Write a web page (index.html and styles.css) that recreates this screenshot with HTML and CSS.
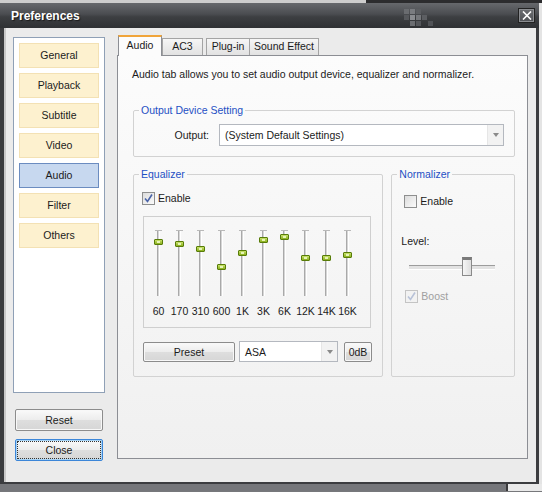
FILE: index.html
```html
<!DOCTYPE html>
<html lang="en">
<head>
  <meta charset="UTF-8">
  <meta name="viewport" content="width=device-width, initial-scale=1.0">
  <title>Preferences</title>
  <link rel="stylesheet" href="styles.css">
</head>
<body>
  <div class="desktop-top"></div>

  <div class="screen">
    <div class="window">
      <div class="titlebar">
        <span class="title">Preferences</span>
        <svg class="deco" width="30" height="18" viewBox="0 0 30 18">
          <rect x="0" y="0" width="5" height="5" fill="#6a6c70"/>
          <rect x="6" y="0" width="5" height="5" fill="#7a7c80"/>
          <rect x="12" y="0" width="5" height="5" fill="#5c5e62"/>
          <rect x="6" y="6" width="5" height="5" fill="#8a8c90"/>
          <rect x="12" y="6" width="5" height="5" fill="#75777b"/>
          <rect x="18" y="6" width="5" height="5" fill="#5c5e62"/>
          <rect x="0" y="6" width="5" height="5" fill="#56585c"/>
          <rect x="6" y="12" width="5" height="5" fill="#6c6e72"/>
          <rect x="12" y="12" width="5" height="5" fill="#55575b"/>
          <rect x="24" y="12" width="5" height="5" fill="#505256"/>
        </svg>
        <span class="close-x">
          <svg width="10" height="9" viewBox="0 0 10 9">
            <path d="M1 0.5 L9 8.5 M9 0.5 L1 8.5" stroke="#ffffff" stroke-width="1.6"/>
          </svg>
        </span>
      </div>

      <div class="client">
        <div class="sidebar">
          <div class="category-list">
            <div class="category">General</div>
            <div class="category">Playback</div>
            <div class="category">Subtitle</div>
            <div class="category">Video</div>
            <div class="category selected">Audio</div>
            <div class="category">Filter</div>
            <div class="category">Others</div>
          </div>
          <div class="push reset">Reset</div>
          <div class="push close">Close</div>
        </div>

        <div class="tabs">
          <div class="tab-strip">
            <div class="tab active">Audio</div>
            <div class="tab tab-ac3">AC3</div>
            <div class="tab tab-plugin">Plug-in</div>
            <div class="tab tab-effect">Sound Effect</div>
          </div>

          <div class="tab-page">
            <p class="desc">Audio tab allows you to set audio output device, equalizer and normalizer.</p>

            <fieldset class="group output-group">
              <legend>Output Device Setting</legend>
              <div class="output-row">
                <span class="output-label">Output:</span>
                <div class="combo output-combo">
                  <span class="combo-text">(System Default Settings)</span>
                  <span class="combo-arrow"></span>
                </div>
              </div>
            </fieldset>

            <div class="group-row">
              <fieldset class="group eq-group">
                <legend>Equalizer</legend>
                <div class="check-row eq-enable">
                  <span class="checkbox checked">
                    <svg width="11" height="11" viewBox="0 0 11 11"><path d="M2 5.5 L4.5 8.5 L9 1.5" fill="none" stroke="#4a64a8" stroke-width="1.6"/></svg>
                  </span>
                  <span>Enable</span>
                </div>

                <div class="eq-box">
                  <div class="band"><div class="track"><span class="thumb" style="top: 8px"></span></div><span class="band-label">60</span></div>
                  <div class="band"><div class="track"><span class="thumb" style="top: 10px"></span></div><span class="band-label">170</span></div>
                  <div class="band"><div class="track"><span class="thumb" style="top: 15px"></span></div><span class="band-label">310</span></div>
                  <div class="band"><div class="track"><span class="thumb" style="top: 33px"></span></div><span class="band-label">600</span></div>
                  <div class="band"><div class="track"><span class="thumb" style="top: 19px"></span></div><span class="band-label">1K</span></div>
                  <div class="band"><div class="track"><span class="thumb" style="top: 6px"></span></div><span class="band-label">3K</span></div>
                  <div class="band"><div class="track"><span class="thumb" style="top: 3px"></span></div><span class="band-label">6K</span></div>
                  <div class="band"><div class="track"><span class="thumb" style="top: 24px"></span></div><span class="band-label">12K</span></div>
                  <div class="band"><div class="track"><span class="thumb" style="top: 24px"></span></div><span class="band-label">14K</span></div>
                  <div class="band"><div class="track"><span class="thumb" style="top: 21px"></span></div><span class="band-label">16K</span></div>
                </div>

                <div class="eq-buttons">
                  <div class="push preset">Preset</div>
                  <div class="combo preset-combo">
                    <span class="combo-text">ASA</span>
                    <span class="combo-arrow"></span>
                  </div>
                  <div class="push zero-db">0dB</div>
                </div>
              </fieldset>

              <fieldset class="group norm-group">
                <legend>Normalizer</legend>
                <div class="check-row norm-enable">
                  <span class="checkbox"></span>
                  <span>Enable</span>
                </div>
                <div class="level-label">Level:</div>
                <div class="hslider">
                  <span class="hthumb"></span>
                </div>
                <div class="check-row boost disabled">
                  <span class="checkbox checked">
                    <svg width="11" height="11" viewBox="0 0 11 11"><path d="M2 5.5 L4.5 8.5 L9 1.5" fill="none" stroke="#b8c2d8" stroke-width="1.6"/></svg>
                  </span>
                  <span>Boost</span>
                </div>
              </fieldset>
            </div>
          </div>
        </div>
      </div>
    </div>
    <div class="edge"></div>
  </div>

  <div class="desktop-bottom"></div>
</body>
</html>
```

FILE: styles.css
```css
* {
  box-sizing: border-box;
}
body {
  margin: 0;
  width: 542px;
  height: 492px;
  overflow: hidden;
  background: #77787b;
  font-family: "Liberation Sans", Arial, sans-serif;
  font-size: 10.5px;
  color: #1b1b1b;
}
.desktop-top {
  height: 3px;
  background: linear-gradient(to right, #cdcdcd 0, #cdcdcd 366px, #2c2c2e 366px);
}
.screen {
  display: flex;
}
.window {
  width: 539px;
  background: #3b3c3f;
  padding-bottom: 2px;
}
.edge {
  width: 3px;
  background: #e4e4e4;
}
.desktop-bottom {
  height: 7px;
  background: linear-gradient(to right, #75767a 0, #75767a 506px, #3a3a3c 506px, #3a3a3c 508px, #e9e9e9 508px);
}

/* title bar */
.titlebar {
  height: 25px;
  display: flex;
  align-items: center;
  padding-left: 11px;
  background: linear-gradient(#66686c, #4a4c50 45%, #3d3f42 55%, #2f3134);
}
.title {
  color: #fff;
  font-weight: bold;
  font-size: 12px;
  text-shadow: 1px 1px 1px #1a1a1a;
}
.deco {
  margin-left: 324px;
  margin-top: 4px;
}
.close-x {
  margin-left: auto;
  margin-right: 4px;
  width: 17px;
  height: 15px;
  display: flex;
  align-items: center;
  justify-content: center;
  background: linear-gradient(#6c6e72, #4e5054);
  border: 1px solid #222;
  box-shadow: inset 0 0 0 1px #8a8c90;
}

/* client area */
.client {
  height: 454px;
  margin: 0 3px 0 4px;
  border-left: 2px solid #c8c8c8;
  background: #ebebeb;
  display: flex;
  align-items: flex-start;
  gap: 12px;
  padding: 7px 0 0 7px;
}
.sidebar {
  width: 92px;
  margin-top: 2px;
}
.category-list {
  height: 356px;
  border: 1px solid #8fa0b6;
  background: #fff;
  padding: 5px;
  display: flex;
  flex-direction: column;
  gap: 5px;
}
.category {
  width: 80px;
  height: 25px;
  line-height: 23px;
  text-align: center;
  background: #fdf1cf;
  border: 1px solid #f3e1b4;
}
.category.selected {
  background: #c7d8ef;
  border-color: #6b8cc0;
}
.push {
  height: 22px;
  line-height: 20px;
  text-align: center;
  border: 1px solid #8c8c8c;
  border-radius: 2px;
  background: linear-gradient(#fafafa, #ececec 50%, #dedede 51%, #d6d6d6);
  box-shadow: inset 0 0 0 1px #f8f8f8;
}
.reset {
  width: 88px;
  margin: 16px 0 0 2px;
}
.close {
  width: 88px;
  margin: 8px 0 0 2px;
  border-color: #3c86d8;
  box-shadow: inset 0 0 0 1px #a8d4f6;
  outline: 1px dotted #333;
  outline-offset: -3px;
}

/* tabs */
.tabs {
  width: 411px;
}
.tab-strip {
  height: 20px;
  display: flex;
  align-items: flex-end;
  padding-left: 1px;
}
.tab {
  height: 17px;
  line-height: 15px;
  text-align: center;
  white-space: nowrap;
  border: 1px solid #a4a4a4;
  border-bottom: none;
  background: linear-gradient(#f6f6f6, #e2e2e2);
  margin-right: -1px;
}
.tab.active {
  width: 44px;
  height: 21px;
  line-height: 17px;
  margin-bottom: -1px;
  margin-right: 0;
  position: relative;
  z-index: 1;
  background: #fcfcfc;
  border-color: #8c8e94;
  border-top: 2px solid #f0a43a;
}
.tab-ac3 {
  width: 41px;
  margin-right: 3px;
}
.tab-plugin {
  width: 44px;
}
.tab-effect {
  width: 70px;
}
.tab-page {
  height: 404px;
  border: 1px solid #8c8e94;
  background: linear-gradient(#fcfcfc, #f0f0f0);
}
.desc {
  margin: 11px 0 0 14px;
  line-height: 14px;
}

/* group boxes */
.group {
  margin: 0;
  padding: 0;
  border: 1px solid #d2d2d2;
  border-radius: 2px;
  min-width: 0;
}
.group legend {
  margin-left: 5px;
  padding: 0 2px;
  line-height: 14px;
  color: #1e50c4;
}
.output-group {
  margin: 22px 12px 0 15px;
}
.output-row {
  display: flex;
  align-items: center;
  padding: 7px 0 10px;
}
.output-label {
  width: 75px;
  text-align: right;
  margin-right: 10px;
}
.combo {
  height: 22px;
  display: flex;
  align-items: center;
  background: #fff;
  border: 1px solid #b4b8bf;
}
.combo-text {
  padding-left: 5px;
}
.combo-arrow {
  margin-left: auto;
  width: 16px;
  height: 100%;
  background: #f2f2f2;
  border-left: 1px solid #e6e6e6;
  position: relative;
}
.combo-arrow::after {
  content: "";
  position: absolute;
  left: 5px;
  top: 8px;
  border-left: 3px solid transparent;
  border-right: 3px solid transparent;
  border-top: 4px solid #8a8a8a;
}
.output-combo {
  width: 285px;
}
.group-row {
  display: flex;
  gap: 8px;
  margin: 10px 12px 0 15px;
}
.eq-group {
  width: 251px;
  height: 210px;
}
.norm-group {
  width: 124px;
  height: 210px;
}

/* check boxes */
.check-row {
  display: flex;
  align-items: center;
  gap: 3px;
  height: 14px;
}
.checkbox {
  width: 13px;
  height: 13px;
  border: 1px solid #8e8f8f;
  background: linear-gradient(135deg, #dcdcdc, #fbfbfb);
  display: flex;
  align-items: center;
  justify-content: center;
}
.eq-enable {
  margin: 10px 0 0 8px;
}
.norm-enable {
  margin: 13px 0 0 12px;
}
.boost {
  margin: 13px 0 0 13px;
}
.disabled {
  color: #a0a0a0;
}
.disabled .checkbox {
  border-color: #c4c4c4;
  background: #f2f2f2;
}

/* equalizer */
.eq-box {
  width: 228px;
  height: 112px;
  margin: 11px 0 0 9px;
  border: 1px solid #cfcfcf;
  display: flex;
  padding-left: 4px;
}
.band {
  width: 21px;
  display: flex;
  flex-direction: column;
  align-items: center;
  padding-top: 14px;
}
.track {
  width: 3px;
  height: 65px;
  border-left: 1px solid #a9a9a9;
  border-right: 1px solid #fff;
  background: #d6d6d6;
  position: relative;
}
.track::before {
  content: "";
  position: absolute;
  top: -1px;
  left: -3px;
  width: 7px;
  height: 1px;
  background: #b9b9b9;
}
.thumb {
  position: absolute;
  left: -4px;
  width: 9px;
  height: 6px;
  border: 1px solid #587c08;
  border-radius: 1px;
  background: linear-gradient(#c8e26a, #8bb01e);
}
.thumb::after {
  content: "";
  position: absolute;
  left: 2px;
  top: 1px;
  width: 3px;
  height: 2px;
  background: #e6f4b8;
}
.band-label {
  margin-top: 8px;
  line-height: 14px;
  white-space: nowrap;
}
.eq-buttons {
  display: flex;
  align-items: center;
  margin: 13px 0 0 9px;
}
.preset {
  width: 92px;
  height: 20px;
  line-height: 18px;
}
.preset-combo {
  width: 99px;
  height: 21px;
  margin-left: 4px;
}
.zero-db {
  width: 28px;
  height: 20px;
  line-height: 18px;
  margin-left: 6px;
}

/* normalizer */
.level-label {
  margin: 26px 0 0 9px;
  line-height: 14px;
}
.hslider {
  position: relative;
  width: 86px;
  height: 19px;
  margin: 9px 0 0 17px;
}
.hslider::before {
  content: "";
  position: absolute;
  left: 0;
  right: 0;
  top: 8px;
  height: 3px;
  border-top: 1px solid #9c9c9c;
  border-bottom: 1px solid #fff;
  background: #e2e2e2;
}
.hthumb {
  position: absolute;
  left: 53px;
  top: 0;
  width: 10px;
  height: 19px;
  border: 1px solid #8a8a8a;
  border-top: 3px solid #7a7a7a;
  background: linear-gradient(to right, #f6f6f6, #dedede);
}
```
